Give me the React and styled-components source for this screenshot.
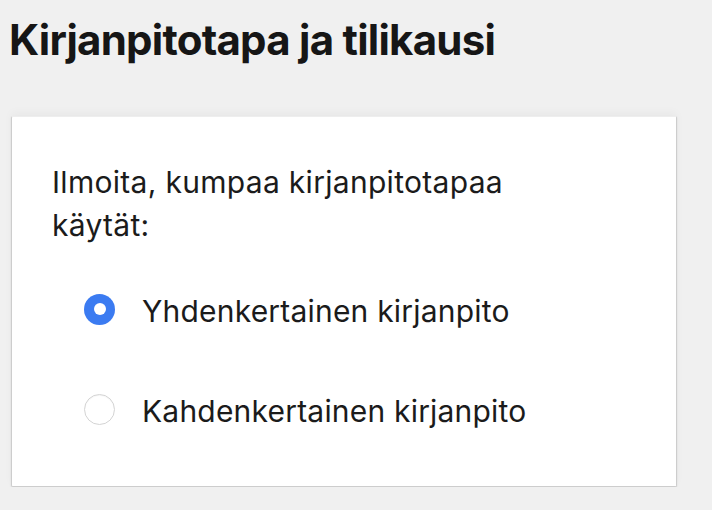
import React, { useState } from "react";
import styled, { createGlobalStyle } from "styled-components";

const GlobalStyle = createGlobalStyle`
  html, body {
    margin: 0;
    background: #f0f0f0;
  }
  body {
    font-family: Inter, "Liberation Sans", Arial, sans-serif;
    color: #1b1b1b;
  }
`;

const Page = styled.main`
  padding: 16px 35px 0 11px;
`;

const Title = styled.h1`
  margin: 0 0 0 -2px;
  font-size: 42px;
  line-height: 48px;
  font-weight: 700;
  letter-spacing: -0.75px;
  color: #161616;
`;

const Card = styled.section`
  margin-top: 52px;
  background: #fff;
  border: 1px solid #cdcdcd;
  border-top-color: #eeeeee;
  border-radius: 2px;
  box-shadow: 0 -4px 8px rgba(0, 0, 0, 0.03), 0 1px 2px rgba(0, 0, 0, 0.1);
  padding: 44px 40px 40px 40px;
  height: 371px;
  box-sizing: border-box;
`;

const Question = styled.p`
  margin: 0;
  max-width: 500px;
  font-size: 30px;
  line-height: 43px;
  letter-spacing: 0.3px;
  color: #1b1b1b;
`;

const Options = styled.div`
  display: flex;
  flex-direction: column;
  gap: 58px;
  margin-top: 43px;
  padding-left: 32px;
`;

const Option = styled.label`
  display: flex;
  align-items: center;
  gap: 27px;
  font-size: 30px;
  line-height: 42px;
  letter-spacing: 0.2px;
  cursor: pointer;
`;

const HiddenInput = styled.input`
  position: absolute;
  opacity: 0;
  pointer-events: none;
`;

const Dot = styled.span`
  width: 31px;
  height: 31px;
  border-radius: 50%;
  box-sizing: border-box;
  flex: none;
  margin-top: -4px;
  background: ${(p) => (p.$checked ? "#3b7bf1" : "#fff")};
  border: ${(p) => (p.$checked ? "none" : "1px solid #d4d4d4")};
  box-shadow: ${(p) => (p.$checked ? "none" : "inset 0 1px 1px rgba(0,0,0,0.04)")};
  display: flex;
  align-items: center;
  justify-content: center;

  &::after {
    content: "";
    width: 12px;
    height: 12px;
    border-radius: 50%;
    background: #fff;
    display: ${(p) => (p.$checked ? "block" : "none")};
  }
`;

const choices = ["Yhdenkertainen kirjanpito", "Kahdenkertainen kirjanpito"];

const App = () => {
  const [value, setValue] = useState(choices[0]);

  return (
    <>
      <GlobalStyle />
      <Page>
        <Title>Kirjanpitotapa ja tilikausi</Title>
        <Card>
          <Question>Ilmoita, kumpaa kirjanpitotapaa käytät:</Question>
          <Options>
            {choices.map((c) => (
              <Option key={c}>
                <HiddenInput
                  type="radio"
                  name="tapa"
                  checked={value === c}
                  onChange={() => setValue(c)}
                />
                <Dot $checked={value === c} />
                {c}
              </Option>
            ))}
          </Options>
        </Card>
      </Page>
    </>
  );
};

export default App;
